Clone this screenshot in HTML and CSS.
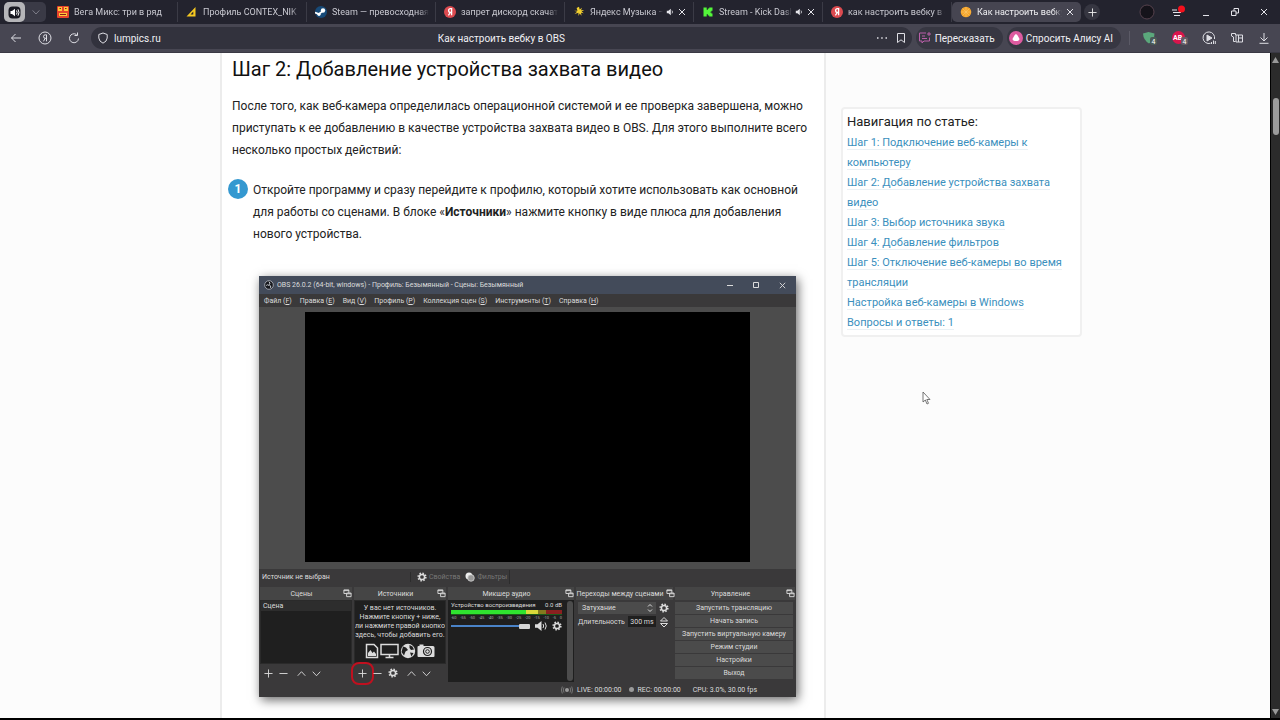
FILE: index.html
```html
<!DOCTYPE html>
<html lang="ru">
<head>
    <meta charset="UTF-8">
    <meta name="viewport" content="width=device-width, initial-scale=1.0">
    <title>Как настроить вебку в OBS</title>
    <link rel="stylesheet" href="styles.css">
</head>
<body>
    <!-- общие иконки -->
    <svg class="sprite" aria-hidden="true">
        <symbol id="i-close" viewBox="0 0 10 10"><path d="M2 2l6 6M8 2l-6 6"/></symbol>
        <symbol id="i-sound" viewBox="0 0 10 10"><path d="M1 3.500h2L6 1v8L3 6.500H1z" fill="currentColor" stroke="none"/><path d="M7.500 3.200q1.300 1.800 0 3.600"/></symbol>
        <symbol id="i-plus" viewBox="0 0 10 10"><path d="M5 .5v9M.5 5h9"/></symbol>
        <symbol id="i-minus" viewBox="0 0 10 10"><path d="M.5 5h9"/></symbol>
        <symbol id="i-up" viewBox="0 0 10 10"><path d="M.8 7.500L5 3l4.200 4.500"/></symbol>
        <symbol id="i-down" viewBox="0 0 10 10"><path d="M.8 3L5 7.500 9.200 3"/></symbol>
        <symbol id="i-gear" viewBox="0 0 10 10"><circle cx="5" cy="5" r="3.800" stroke-width="1.600" stroke-dasharray="1.500 1.480"/><circle cx="5" cy="5" r="2.600" stroke-width="1.500"/></symbol>
        <symbol id="i-dock" viewBox="0 0 10 10"><path d="M1 1h5.500v4H1zM1 1.800h5.500"/><path d="M4 4.500h5v4H4z" fill="#444"/><path d="M4 5.300h5"/></symbol>
        <symbol id="i-ya" viewBox="0 0 12 12"><circle cx="6" cy="6" r="6" fill="#dc4b50" stroke="none"/><path d="M7.600 9.300V2.700H6.500a1.900 1.900 0 0 0 0 3.800h1.100M6.300 6.500L4.400 9.300" stroke="#fff" stroke-width="1.300"/></symbol>
    </svg>

    <nav class="tabs">
        <div class="sound-group">
            <button class="sound-on" aria-label="Звук"><svg width="13" height="13" viewBox="0 0 13 13"><rect x=".5" y=".5" width="12" height="12" rx="4" fill="#191921" stroke="none"/><path d="M2.500 5h1.500l3-2.200v7.400L4 8H2.500z" fill="#fff" stroke="none"/><path d="M8.500 4.500q1.200 2 0 4M10 3.300q2 3.200 0 6.400" stroke="#fff"/></svg></button>
            <button class="sound-more" aria-label="Ещё"><svg width="8" height="8"><use href="#i-down"/></svg></button>
        </div>
        <button class="tab">
            <svg width="12" height="12" viewBox="0 0 12 12"><rect width="12" height="12" rx="1" fill="#e8442c" stroke="none"/><path d="M1 1h4v4H1zM7 1h4v4H7zM2 7h8v3H2z" fill="#ffc83a" stroke="none"/><path d="M2.500 2.500h1.500M8 2.500h1.500M3 8.500h6" stroke="#8a1c17"/></svg>
            <span class="tab-name">Вега Микс: три в ряд</span>
        </button>
        <button class="tab">
            <svg width="12" height="12" viewBox="0 0 12 12"><path d="M.5 10.500L9.500 1v9.500zM4.500 8.500h2.800V5.500z" fill="#f5c821" fill-rule="evenodd" stroke="none"/></svg>
            <span class="tab-name">Профиль CONTEX_NIK</span>
        </button>
        <button class="tab">
            <svg width="12" height="12" viewBox="0 0 12 12"><circle cx="6" cy="6" r="6" fill="#174a78" stroke="none"/><path d="M0 6.500L4 8l3.300-2.600" stroke="#fff" stroke-width="1.800"/><circle cx="8" cy="4.500" r="2.200" fill="#fff" stroke="none"/><circle cx="4" cy="8.300" r="1.600" fill="#fff" stroke="none"/></svg>
            <span class="tab-name">Steam — превосходная</span>
        </button>
        <button class="tab">
            <svg width="12" height="12"><use href="#i-ya"/></svg>
            <span class="tab-name">запрет дискорд скачать</span>
        </button>
        <button class="tab">
            <svg width="12" height="12" viewBox="0 0 12 12"><path d="M6 .8l.7 2.800 2.300-1.800-1 2.500 3.200-.3-2.600 1.500 2.200 1.800-2.800-.5.6 3-1.900-2.300-1.200 2.500-.1-3.300L1.500 8l2.700-2.200-3-1 3.300-.1L3.600 2z" fill="#f3d02f" stroke="none"/></svg>
            <span class="tab-name">Яндекс Музыка —</span>
            <svg class="mini" width="8" height="8"><use href="#i-sound"/></svg>
            <svg class="mini" width="10" height="10"><use href="#i-close"/></svg>
        </button>
        <button class="tab">
            <svg width="12" height="12" viewBox="0 0 12 12"><path d="M1.500 1.500h3.200v2.200h1.200V2.600h1.300V1.500h3.300v3.200H9.400v1H8.300v.8h1.100v1h1.100v3H7.200V9.400H5.900V8.200H4.700v2.300H1.500z" fill="#53f63a" stroke="none"/></svg>
            <span class="tab-name">Stream - Kick Dashb</span>
            <svg class="mini" width="8" height="8"><use href="#i-sound"/></svg>
            <svg class="mini" width="10" height="10"><use href="#i-close"/></svg>
        </button>
        <button class="tab">
            <svg width="12" height="12"><use href="#i-ya"/></svg>
            <span class="tab-name">как настроить вебку в об</span>
        </button>
        <button class="tab active">
            <svg width="12" height="12" viewBox="0 0 12 12"><circle cx="6" cy="6" r="5.300" fill="#f5a52b" stroke="none"/><path d="M6 1v10M1 6h10M2.500 2.500l7 7M9.500 2.500l-7 7" stroke="#fbc76b" stroke-width=".6"/></svg>
            <span class="tab-name">Как настроить вебку</span>
            <svg class="mini" width="10" height="10"><use href="#i-close"/></svg>
        </button>
        <button class="new-tab" aria-label="Новая вкладка"><svg width="9" height="9"><use href="#i-plus"/></svg></button>
        <div class="window-buttons">
            <button aria-label="Профиль"><svg width="16" height="16" viewBox="0 0 16 16"><circle cx="8" cy="8" r="7" fill="#15131a" stroke="#55414c"/></svg></button>
            <button class="menu" aria-label="Меню"><svg width="16" height="16" viewBox="0 0 16 16"><path d="M2 6h5M3 8.500h8M4 11.500h6"/><circle cx="11.500" cy="5" r="3.500" fill="#f5101c" stroke="none"/></svg></button>
            <button aria-label="Свернуть"><svg width="10" height="10" viewBox="0 0 10 10"><path d="M2 8.500h6"/></svg></button>
            <button aria-label="Развернуть"><svg width="10" height="10" viewBox="0 0 10 10"><path d="M1.500 4h4.500v4.500H1.500zM4 4V1.500h4.500V6H6"/></svg></button>
            <button aria-label="Закрыть"><svg width="10" height="10"><use href="#i-close"/></svg></button>
        </div>
    </nav>

    <div class="toolbar">
        <button aria-label="Назад"><svg width="12" height="12" viewBox="0 0 12 12"><path d="M11 6H1.500M5.500 2l-4 4 4 4"/></svg></button>
        <button aria-label="Яндекс"><svg width="14" height="14" viewBox="0 0 14 14"><circle cx="7" cy="7" r="6"/><path d="M8.500 10.300V3.800H7.300a1.700 1.700 0 0 0 0 3.500h1.200M7.200 7.300l-1.700 3"/></svg></button>
        <button aria-label="Обновить"><svg width="12" height="12" viewBox="0 0 12 12"><path d="M10.500 6.500A4.500 4.500 0 1 1 8.500 2.500M6.500 3.500h3V.5"/></svg></button>
        <div class="omnibox">
            <div class="address">
                <svg width="12" height="12" viewBox="0 0 12 12"><path d="M6 1l4.200 1.500v3.500q-.3 3.500-4.200 5.200Q2.100 9.500 1.800 6V2.500z"/></svg>
                <input class="url" type="text" value="lumpics.ru" aria-label="Адрес">
            </div>
            <span class="page-title">Как настроить вебку в OBS</span>
            <div class="omni-end">
                <button aria-label="Ещё"><svg width="12" height="12" viewBox="0 0 12 12"><path d="M1 6h1.500M5.200 6h1.500M9.500 6H11" stroke-width="1.500"/></svg></button>
                <button aria-label="Закладка"><svg width="10" height="12" viewBox="0 0 10 12"><path d="M1.500 1.500h7v9L5 7.800 1.500 10.500z"/></svg></button>
            </div>
        </div>
        <button class="pill">
            <svg width="14" height="14" viewBox="0 0 14 14"><path d="M8 2H1.500v8H4v2l2-2h5.500V6.500M4 5h3M4 7.500h5M11 1v4M9 3h4" stroke="#b95fa8"/></svg>
            Пересказать
        </button>
        <button class="pill">
            <svg width="14" height="14" viewBox="0 0 14 14"><circle cx="7" cy="7" r="7" fill="#dd5ba0" stroke="none"/><path d="M7 3q1.200.4 3.300 4.600Q11 10 7 10T3.700 7.600Q5.800 3.400 7 3z" fill="#fff" stroke="none"/></svg>
            Спросить Алису AI
        </button>
        <div class="extensions">
            <button aria-label="Защита"><svg width="16" height="14" viewBox="0 0 16 14"><path d="M1 2.500L6.500 1l6 1.500Q12.500 9 7 12.500 1.300 9 1 2.500z" fill="#5ba87c" stroke="none"/><rect x="8" y="6" width="7" height="8" rx="2" fill="#4a5a58" stroke="none"/><text x="9.500" y="12.500">4</text></svg></button>
            <button aria-label="Блокировщик"><svg width="16" height="14" viewBox="0 0 16 14"><circle cx="6.500" cy="6.500" r="6.500" fill="#d9154c" stroke="none"/><text class="ab" x="1" y="9">AB</text><rect x="9" y="6" width="7" height="8" rx="2" fill="#665b65" stroke="none"/><text x="10.500" y="12.500">4</text></svg></button>
            <button aria-label="Видео"><svg width="14" height="14" viewBox="0 0 14 14"><path d="M8.500 12.300A5.800 5.800 0 1 1 12.500 8"/><path d="M5 4l5 3-5 3z" fill="currentColor"/><path d="M9.500 13v-2M11.500 13V9.500M13.300 13v-3"/></svg></button>
            <button aria-label="Коллекции"><svg width="14" height="14" viewBox="0 0 14 14"><path d="M5.500 4V2.500h-4V5l2 1v4.500h2M6 4h6.500v7H6zM8.500 4v7M8.500 7h4"/></svg></button>
            <button aria-label="Загрузки"><svg width="12" height="12" viewBox="0 0 12 12"><path d="M6 1v7.500M2.500 5.500L6 9l3.500-3.500M1.500 11.300h9"/></svg></button>
        </div>
    </div>

    <div class="viewport">
        <main class="page">
            <article class="article">
                <h2>Шаг 2: Добавление устройства захвата видео</h2>
                <p>После того, как веб-камера определилась операционной системой и ее проверка завершена, можно приступать к ее добавлению в качестве устройства захвата видео в OBS. Для этого выполните всего несколько простых действий:</p>
                <ol class="steps">
                    <li>
                        <span class="step-number">1</span>
                        <div>
                            Откройте программу и сразу перейдите к профилю, который хотите использовать как основной для работы со сценами. В блоке «<strong>Источники</strong>» нажмите кнопку в виде плюса для добавления нового устройства.
                            <!-- окно OBS -->
                            <div class="obs">
                                <div class="obs-title">
                                    <svg width="10" height="10" viewBox="0 0 10 10"><circle cx="5" cy="5" r="4.300" fill="#15171c" stroke="#c8ccd2" stroke-width=".7"/><path d="M4.800 1.800q2.200 1 .4 3M2.200 5.500q1.500-1.500 2.800 0M5.200 5q2.300.5 1.300 2.800" stroke="#c8ccd2"/></svg>
                                    <span>OBS 26.0.2 (64-bit, windows) - Профиль: Безымянный - Сцены: Безымянный</span>
                                    <div class="obs-window-buttons">
                                        <button aria-label="Свернуть"><svg width="8" height="8" viewBox="0 0 8 8"><path d="M1 4.500h6"/></svg></button>
                                        <button aria-label="Развернуть"><svg width="8" height="8" viewBox="0 0 8 8"><path d="M1.500 1.500h5v5h-5z"/></svg></button>
                                        <button aria-label="Закрыть"><svg width="9" height="9"><use href="#i-close"/></svg></button>
                                    </div>
                                </div>
                                <div class="obs-menu">
                                    <button>Файл (<u>F</u>)</button>
                                    <button>Правка (<u>E</u>)</button>
                                    <button>Вид (<u>V</u>)</button>
                                    <button>Профиль (<u>P</u>)</button>
                                    <button>Коллекция сцен (<u>S</u>)</button>
                                    <button>Инструменты (<u>T</u>)</button>
                                    <button>Справка (<u>H</u>)</button>
                                </div>
                                <div class="preview"><div class="canvas"></div></div>
                                <div class="source-bar">
                                    <span class="no-source">Источник не выбран</span>
                                    <button disabled><svg width="10" height="10"><use href="#i-gear"/></svg>Свойства</button>
                                    <button disabled><svg width="10" height="10" viewBox="0 0 10 10"><circle cx="4" cy="4" r="3.500" fill="#eee" stroke="none"/><circle cx="6" cy="6" r="3.300" fill="#999" stroke="#ddd" stroke-width=".7"/></svg>Фильтры</button>
                                </div>
                                <div class="docks">
                                    <section class="dock">
                                        <h3>Сцены<svg width="9" height="9"><use href="#i-dock"/></svg></h3>
                                        <div class="list"><div class="scene">Сцена</div></div>
                                        <div class="dock-tools">
                                            <button aria-label="Добавить"><svg width="9" height="9"><use href="#i-plus"/></svg></button>
                                            <button aria-label="Удалить"><svg width="9" height="9"><use href="#i-minus"/></svg></button>
                                            <button class="move-up" aria-label="Вверх"><svg width="9" height="9"><use href="#i-up"/></svg></button>
                                            <button aria-label="Вниз"><svg width="9" height="9"><use href="#i-down"/></svg></button>
                                        </div>
                                    </section>
                                    <section class="dock">
                                        <h3>Источники<svg width="9" height="9"><use href="#i-dock"/></svg></h3>
                                        <div class="list empty">
                                            <span>У вас нет источников.</span>
                                            <span>Нажмите кнопку + ниже,</span>
                                            <span>или нажмите правой кнопкой</span>
                                            <span>здесь, чтобы добавить его.</span>
                                            <div class="kinds">
                                                <svg width="14" height="16" viewBox="0 0 14 16"><path d="M1.500 1.500h7.500l3.500 3.500v9.500h-11z" stroke-width="1.500"/><path d="M3 13V10l2.500-3 2 3L9 8.500l2 2.500v2z" fill="currentColor" stroke="none"/></svg>
                                                <svg width="19" height="16" viewBox="0 0 19 16"><path d="M1 1.500h17v10H1zM9.500 11.500v3M5.500 14.500h8" stroke-width="1.500"/></svg>
                                                <svg width="16" height="16" viewBox="0 0 16 16"><circle cx="8" cy="8" r="7.200" fill="currentColor" stroke="none"/><path d="M3 3.500l3 1 2 2.500-2.500 1.500L4 12.500 1.500 9zM9.500 2l3 1.500 1.500 3-3 .5-1.500-2zM10 9.500l3.500.5-2 3.500z" fill="#1f1f1f" stroke="none"/></svg>
                                                <svg width="18" height="16" viewBox="0 0 18 16"><path d="M2.500 3V1.500h4V3H16q1.500 0 1.500 1.500v8.500q0 1-1 1h-15Q.5 14 .5 13V4q0-1 1-1z" fill="currentColor" stroke="none"/><circle cx="10.500" cy="8.500" r="4" stroke="#1f1f1f" stroke-width="1.200"/><circle cx="10.500" cy="8.500" r="1.800" stroke="#1f1f1f"/></svg>
                                            </div>
                                        </div>
                                        <div class="dock-tools">
                                            <button class="marked" aria-label="Добавить"><svg width="9" height="9"><use href="#i-plus"/></svg></button>
                                            <button aria-label="Удалить"><svg width="9" height="9"><use href="#i-minus"/></svg></button>
                                            <button aria-label="Настроить"><svg width="10" height="10"><use href="#i-gear"/></svg></button>
                                            <button class="move-up" aria-label="Вверх"><svg width="9" height="9"><use href="#i-up"/></svg></button>
                                            <button aria-label="Вниз"><svg width="9" height="9"><use href="#i-down"/></svg></button>
                                        </div>
                                    </section>
                                    <section class="dock">
                                        <h3>Микшер аудио<svg width="9" height="9"><use href="#i-dock"/></svg></h3>
                                        <div class="mixer">
                                            <div class="channel">
                                                <div class="channel-name"><label for="volume">Устройство воспроизведения</label><span>0.0 dB</span></div>
                                                <div class="meter"></div>
                                                <div class="scale"><span>-60</span><span>-55</span><span>-50</span><span>-45</span><span>-40</span><span>-35</span><span>-30</span><span>-25</span><span>-20</span><span>-15</span><span>-10</span><span>-5</span><span>0</span></div>
                                                <div class="volume">
                                                    <input id="volume" type="range" min="0" max="100" value="100">
                                                    <button aria-label="Выключить звук"><svg width="13" height="10" viewBox="0 0 13 10"><path d="M0 3.200h2.500L6.500 0v10L2.500 6.800H0z" fill="currentColor" stroke="none"/><path d="M8 3q1.300 2 0 4M10 1.500q2.500 3.500 0 7"/></svg></button>
                                                    <button aria-label="Настройки канала"><svg width="10" height="10"><use href="#i-gear"/></svg></button>
                                                </div>
                                            </div>
                                            <div class="mixer-scroll"></div>
                                        </div>
                                    </section>
                                    <section class="dock">
                                        <h3>Переходы между сценами<svg width="9" height="9"><use href="#i-dock"/></svg></h3>
                                        <div class="transition-row">
                                            <div class="select-box">
                                                <select aria-label="Переход"><option>Затухание</option></select>
                                                <svg width="6" height="10" viewBox="0 0 6 10"><path d="M1 3.500l2-2 2 2M1 6.500l2 2 2-2"/></svg>
                                            </div>
                                            <button aria-label="Свойства перехода"><svg width="10" height="10"><use href="#i-gear"/></svg></button>
                                        </div>
                                        <div class="transition-row">
                                            <label for="duration">Длительность</label>
                                            <input id="duration" type="text" value="300 ms">
                                            <svg width="10" height="12" viewBox="0 0 10 12"><path d="M1.500 5L5 1.500 8.500 5zM1.500 7.500L5 11l3.500-3.500z"/></svg>
                                        </div>
                                    </section>
                                    <section class="dock">
                                        <h3>Управление<svg width="9" height="9"><use href="#i-dock"/></svg></h3>
                                        <div class="controls">
                                            <button>Запустить трансляцию</button>
                                            <button>Начать запись</button>
                                            <button>Запустить виртуальную камеру</button>
                                            <button>Режим студии</button>
                                            <button>Настройки</button>
                                            <button>Выход</button>
                                        </div>
                                    </section>
                                </div>
                                <div class="status">
                                    <svg width="12" height="8" viewBox="0 0 12 8"><circle cx="6" cy="4" r="2" fill="#999" stroke="none"/><path d="M3 1.500q-1.500 2.500 0 5M1.300.5q-1.800 3.500 0 7M9 1.500q1.500 2.500 0 5M10.700.5q1.800 3.500 0 7" stroke="#888" stroke-width=".8"/></svg>
                                    <span>LIVE: 00:00:00</span>
                                    <i class="rec-dot"></i>
                                    <span>REC: 00:00:00</span>
                                    <span class="cpu">CPU: 3.0%, 30.00 fps</span>
                                </div>
                            </div>
                        </div>
                    </li>
                </ol>
            </article>
            <aside class="contents">
                <h4>Навигация по статье:</h4>
                <ul>
                    <li><a href="#step1">Шаг 1: Подключение веб-камеры к компьютеру</a></li>
                    <li><a href="#step2">Шаг 2: Добавление устройства захвата видео</a></li>
                    <li><a href="#step3">Шаг 3: Выбор источника звука</a></li>
                    <li><a href="#step4">Шаг 4: Добавление фильтров</a></li>
                    <li><a href="#step5">Шаг 5: Отключение веб-камеры во время трансляции</a></li>
                    <li><a href="#windows">Настройка веб-камеры в Windows</a></li>
                    <li><a href="#faq">Вопросы и ответы: 1</a></li>
                </ul>
            </aside>
        </main>
        <div class="scrollbar">
            <svg width="7" height="6" viewBox="0 0 7 6"><path d="M3.500 0L7 6H0z"/></svg>
            <div class="thumb"></div>
            <svg width="7" height="6" viewBox="0 0 7 6"><path d="M0 0h7L3.500 6z"/></svg>
        </div>
    </div>

    <svg class="cursor" width="9" height="14" viewBox="0 0 9 14"><path d="M1 1v10l2.300-2 1.700 4 1.500-.7-1.700-3.800H8z" fill="#fff" stroke="#555" stroke-width=".8"/></svg>
</body>
</html>
```
FILE: styles.css
```css
* {
    box-sizing: border-box;
}
body {
    margin: 0;
    height: 100vh;
    display: flex;
    flex-direction: column;
    overflow: hidden;
    background: #fcfcfc;
    border-bottom: 2px solid #000;
    font-family: Roboto, "Noto Sans", sans-serif;
    color: #222;
}
svg {
    flex: none;
    display: block;
    fill: none;
    stroke: currentColor;
    stroke-width: 1;
}
.sprite {
    position: absolute;
    width: 0;
    height: 0;
}
button {
    display: flex;
    align-items: center;
    justify-content: center;
    margin: 0;
    padding: 0;
    border: 0;
    background: none;
    color: inherit;
    font: inherit;
    white-space: nowrap;
    cursor: pointer;
}

/* Вкладки */
.tabs {
    display: flex;
    align-items: center;
    flex: none;
    height: 24px;
    padding: 0 11px 0 4px;
    background: #23232e;
    color: #c9c9d1;
    font-size: 9px;
}
.sound-group {
    display: flex;
    height: 20px;
    margin-right: 3px;
    border-radius: 5px;
    background: #3a3a46;
}
.sound-on {
    width: 21px;
    border-radius: 5px;
    background: #b5b5b8;
}
.sound-more {
    width: 21px;
    color: #8f8f9b;
}
.tab {
    flex: 0 1 129px;
    min-width: 0;
    height: 20px;
    padding: 0 6px 0 8px;
    justify-content: flex-start;
    gap: 5px;
    border-right: 1px solid #3b3b46;
}
.tab-name {
    flex: 1;
    min-width: 0;
    overflow: hidden;
    text-align: left;
    mask-image: linear-gradient(to right, #000 90%, transparent);
}
.tab .mini {
    margin-left: -2px;
    color: #e4e4ea;
}
.tab.active {
    border: 0;
    border-radius: 5px;
    background: #464551;
    color: #f2f2f5;
}
.new-tab {
    width: 16px;
    height: 16px;
    margin-left: 3px;
    border-radius: 8px;
    background: #363641;
    color: #eee;
}
.window-buttons {
    display: flex;
    align-items: center;
    gap: 19px;
    margin-left: auto;
    color: #e4e4ea;
}
.window-buttons .menu {
    margin: 0 -4px;
}

/* Адресная строка */
.toolbar {
    display: flex;
    align-items: center;
    flex: none;
    height: 29px;
    padding: 0 10px;
    background: #474652;
    border-bottom: 1px solid #3a3944;
    color: #dedee4;
    font-size: 10px;
}
.toolbar > button {
    margin-right: 16px;
}
.toolbar > button:nth-child(3) {
    margin-right: 11px;
}
.omnibox {
    flex: 1;
    display: grid;
    grid-template-columns: 1fr auto 1fr;
    align-items: center;
    height: 22px;
    padding: 0 6px;
    border-radius: 11px;
    background: #32323d;
}
.address {
    display: flex;
    align-items: center;
    gap: 5px;
}
.url {
    flex: 1;
    min-width: 0;
    padding: 0;
    border: 0;
    background: none;
    color: #f0f0f4;
    font: inherit;
}
.page-title {
    color: #f0f0f4;
}
.omni-end {
    display: flex;
    justify-content: flex-end;
    gap: 8px;
}
.toolbar > .pill {
    height: 22px;
    margin: 0 0 0 4px;
    padding: 0 8px 0 2px;
    gap: 3px;
    border-radius: 11px;
    background: #373742;
    color: #f0f0f4;
}
.extensions {
    display: flex;
    align-items: center;
    gap: 14px;
    margin-left: 8px;
    padding-left: 12px;
    border-left: 1px solid #5b5a66;
}
.extensions text {
    fill: #fff;
    stroke: none;
    font-size: 7px;
}
.extensions .ab {
    font-weight: bold;
}

/* Страница */
.viewport {
    flex: 1;
    min-height: 0;
    display: flex;
}
.page {
    flex: 1;
    display: flex;
    align-items: flex-start;
    gap: 15px;
    max-width: 894px;
    margin: 0 auto;
    padding-left: 32px;
}
.article {
    flex: 1;
    min-width: 0;
    align-self: stretch;
    padding: 0 10px;
    border: 1px solid #ececec;
    border-width: 0 2px;
    background: #fff;
    font-size: 12px;
    line-height: 22px;
}
.article h2 {
    margin: 0 0 10px;
    color: #111;
    font-size: 20px;
    font-weight: normal;
    line-height: 32px;
}
.article p {
    margin: 0 0 18px;
}
.steps {
    margin: 0 0 0 -4px;
    padding: 0;
    list-style: none;
}
.steps li {
    display: grid;
    grid-template-columns: 20px 1fr;
    gap: 5px;
}
.step-number {
    width: 20px;
    height: 20px;
    border-radius: 50%;
    background: #3498d0;
    color: #fff;
    font-weight: bold;
    line-height: 20px;
    text-align: center;
}
.contents {
    flex: 0 0 241px;
    margin-top: 54px;
    padding: 2px 4px;
    border: 2px solid #f0f0f0;
    border-radius: 4px;
    background: #fff;
    font-size: 11px;
    line-height: 20px;
}
.contents h4 {
    margin: 0;
    font-size: 13px;
    font-weight: normal;
    line-height: 22px;
}
.contents ul {
    margin: 0;
    padding: 0;
    list-style: none;
}
.contents a {
    border-bottom: 1px solid #eaf1f5;
    color: #3a8fbd;
    text-decoration: none;
}

/* Окно OBS */
.obs {
    margin: 31px 18px 0 6px;
    background: #3a393a;
    box-shadow: 2px 3px 10px rgba(0, 0, 0, 0.6);
    color: #dcdcdc;
    font-size: 7px;
    line-height: 10px;
}
.obs-title {
    display: flex;
    align-items: center;
    gap: 3px;
    height: 18px;
    padding: 0 9px 0 5px;
    background: #434b5a;
}
.obs-window-buttons {
    display: flex;
    gap: 18px;
    margin-left: auto;
}
.obs-menu {
    display: flex;
    gap: 8px;
    height: 13px;
    padding: 0 5px;
}
.preview {
    padding: 5px 46px 7px;
    background: #4c4c4c;
}
.canvas {
    aspect-ratio: 445 / 250;
    background: #000;
}
.source-bar {
    display: flex;
    align-items: center;
    height: 16px;
    padding-left: 3px;
}
.source-bar button {
    gap: 2px;
    height: 14px;
    margin-right: 5px;
    color: #777;
}
.source-bar button:last-child {
    padding-right: 2px;
    border-right: 1px solid #2c2c2c;
}
.source-bar svg {
    color: #ddd;
}
.no-source {
    flex: 0 1 149px;
    margin-right: 6px;
    border-right: 1px solid #2c2c2c;
}
.docks {
    display: grid;
    grid-template-columns: 92fr 92fr 126fr 97fr 120fr;
    gap: 2px;
    height: 97px;
    padding: 2px 1px 0;
}
.dock {
    display: flex;
    flex-direction: column;
    min-width: 0;
}
.dock h3 {
    display: flex;
    flex: none;
    align-items: center;
    justify-content: center;
    gap: 2px;
    height: 13px;
    margin: 0;
    background: #454545;
    font-size: 7px;
    font-weight: normal;
    white-space: nowrap;
}
.dock h3 svg {
    margin-left: auto;
}
.dock h3::before {
    content: "";
    margin-right: auto;
}
.list {
    flex: 1;
    min-height: 0;
    overflow: hidden;
    border: 1px solid #2a2a2a;
    background: #1f1f1f;
}
.scene {
    padding-left: 2px;
    background: #2d2d2d;
}
.empty {
    display: flex;
    flex-direction: column;
    align-items: center;
    padding-top: 3px;
    line-height: 9px;
    white-space: nowrap;
}
.kinds {
    display: flex;
    gap: 1px;
    margin-top: 3px;
}
.dock-tools {
    display: flex;
    flex: none;
    align-items: center;
    gap: 6px;
    height: 18px;
    padding-left: 4px;
}
.move-up {
    margin-left: 3px;
}
.marked {
    outline: 2px solid #c0101f;
    outline-offset: 5px;
    border-radius: 1px;
}
.mixer {
    display: flex;
    flex: 1;
    background: #1f1f1f;
}
.channel {
    flex: 1;
    min-width: 0;
    padding: 0 4px 0 3px;
}
.channel-name {
    display: flex;
    justify-content: space-between;
    font-size: 6px;
    white-space: nowrap;
}
.meter {
    height: 5px;
    background: linear-gradient(to right, #2fe32f 68%, #d9d93a 68% 78%, #847a1f 78% 86%, #8a2020 86%);
    border-bottom: 1px solid #1a5a1a;
}
.scale {
    display: flex;
    justify-content: space-between;
    color: #aaa;
    font-size: 4px;
    line-height: 5px;
}
.volume {
    display: flex;
    align-items: center;
    gap: 4px;
    height: 12px;
}
.volume input {
    flex: 1;
    min-width: 0;
    height: 6px;
    margin: 0 1px 0 0;
    appearance: none;
    background: linear-gradient(#4a83c8, #4a83c8) center / 100% 2px no-repeat;
}
.volume input::-webkit-slider-thumb {
    appearance: none;
    width: 11px;
    height: 5px;
    border-radius: 1px;
    background: #d5d5d5;
}
.mixer-scroll {
    width: 6px;
    margin: 1px;
    border-radius: 3px;
    background: #4c4c4c;
}
.transition-row {
    display: flex;
    align-items: center;
    gap: 3px;
    height: 13px;
    margin: 1px 4px 0 2px;
}
.select-box {
    display: flex;
    flex: 1;
    align-items: center;
    min-width: 0;
    padding-right: 3px;
    background: #4b4b4b;
}
.select-box select {
    flex: 1;
    min-width: 0;
    height: 12px;
    padding: 0 4px;
    border: 0;
    appearance: none;
    background: none;
    color: inherit;
    font: inherit;
}
.transition-row input {
    flex: 1;
    min-width: 0;
    height: 11px;
    padding: 0 2px;
    border: 0;
    background: #1f1f1f;
    color: inherit;
    font: inherit;
    text-align: center;
}
.controls {
    display: grid;
    gap: 1px;
    padding: 2px 2px 0 0;
}
.controls button {
    height: 12px;
    background: #4b4b4b;
}
.status {
    display: flex;
    align-items: center;
    justify-content: flex-end;
    gap: 4px;
    height: 15px;
    padding-right: 39px;
}
.rec-dot {
    width: 5px;
    height: 5px;
    margin-left: 3px;
    border-radius: 50%;
    background: #9a9a9a;
}
.cpu {
    margin-left: 8px;
}

/* Полоса прокрутки */
.scrollbar {
    display: flex;
    flex: none;
    flex-direction: column;
    align-items: center;
    width: 10px;
    padding: 4px 0 3px;
    border-left: 1px solid #000;
    background: #2b2b2b;
}
.scrollbar svg {
    fill: #999;
    stroke: none;
}
.thumb {
    width: 6px;
    height: 37px;
    margin: 35px 0 auto;
    border-radius: 3px;
    background: #9b9b9b;
}
.cursor {
    position: absolute;
    left: 922px;
    top: 391px;
}
```
